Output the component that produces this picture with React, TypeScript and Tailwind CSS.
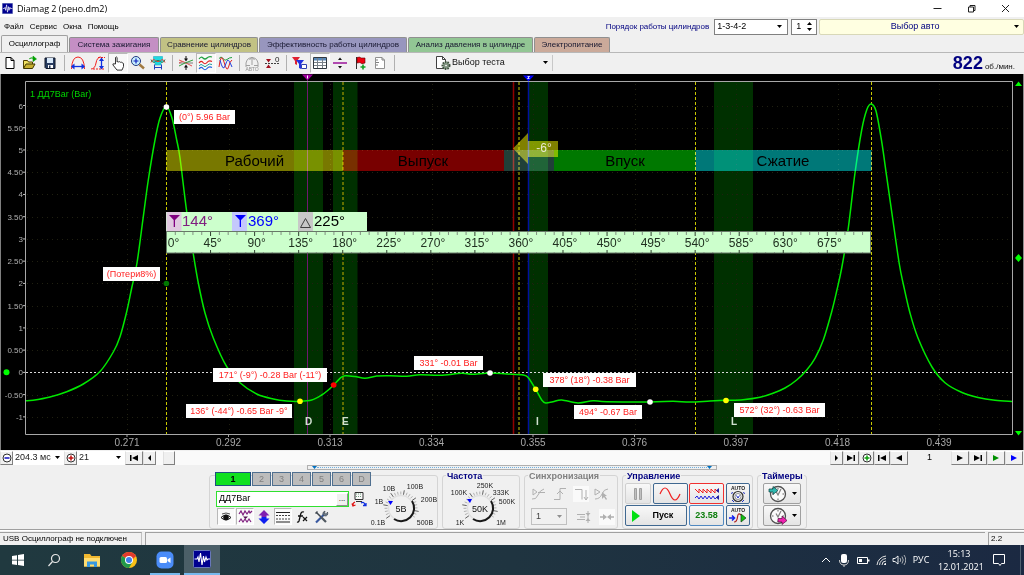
import React from "react";

type Pt = [number, number];

const UI = "font-['Liberation_Sans',Arial,sans-serif]";

/* ---------- chart data ---------- */

const CURVE: Pt[] = [
  [26, 400.8], [33, 400.3], [50, 397], [66.7, 391.7], [83.3, 384], [100, 371.5], [113.3, 352], [120, 336.7],
  [126.7, 311.7], [131.7, 288], [137, 263], [143.3, 216.7], [148.3, 180], [155, 140], [160, 118], [166.4, 106.5],
  [172, 118], [176.7, 140], [180, 158], [186.7, 211.7], [193.3, 254], [198.3, 283], [205, 313], [213.3, 338],
  [226.7, 366.7], [240, 382.7], [256.7, 394], [273.3, 399], [286.7, 401], [300, 401.3], [311.7, 400], [321.7, 395],
  [328.3, 390], [333.7, 385], [340, 378.3], [345, 375.8], [355, 376.5], [365, 378.3], [376.7, 376], [390, 375.7],
  [406.7, 376.3], [420, 374.7], [440, 375.3], [461.7, 373.3], [471.7, 374.3], [490, 373], [506.7, 374],
  [523.3, 375], [528.3, 377.7], [535.7, 389.3], [541.7, 400], [545.7, 403], [553, 401.7], [561.7, 400],
  [578, 403], [593, 400.8], [606.7, 401.7], [650, 402], [673, 401.3], [690, 402], [710, 401], [726, 400.3],
  [743, 399.7], [760, 397.3], [773, 393.3], [785, 388], [796.7, 380], [806.7, 370], [815, 358.3], [823.3, 340],
  [831.7, 311.7], [836.7, 291], [841.7, 268], [848.3, 228], [855, 173], [861.7, 130], [866.7, 110], [871, 104],
  [876, 111], [881.7, 141.7], [886.7, 176.7], [893.3, 223], [899.3, 264], [903.5, 285], [910, 313], [918, 338],
  [932, 367], [945, 382.7], [962, 392.5], [978, 397.5], [995, 400.3], [1012, 401.5],
];

function smooth(points: Pt[]): string {
  let d = `M${points[0][0]} ${points[0][1]}`;
  for (let i = 0; i < points.length - 1; i++) {
    const p0 = points[Math.max(i - 1, 0)];
    const p1 = points[i];
    const p2 = points[i + 1];
    const p3 = points[Math.min(i + 2, points.length - 1)];
    d += `C${p1[0] + (p2[0] - p0[0]) / 6} ${p1[1] + (p2[1] - p0[1]) / 6} ${p2[0] - (p3[0] - p1[0]) / 6} ${p2[1] - (p3[1] - p1[1]) / 6} ${p2[0]} ${p2[1]}`;
  }
  return d;
}

const Y_LABELS = ["6", "5.50", "5", "4.50", "4", "3.50", "3", "2.50", "2", "1.50", "1", "0.50", "0", "-0.50", "-1"];
const X_LABELS = ["0.271", "0.292", "0.313", "0.334", "0.355", "0.376", "0.397", "0.418", "0.439"];
const BANDS: Pt[] = [[294, 323], [333, 357.5], [528, 548], [714, 753]];
const MARKS = [
  { x: 174, y: 110, w: 61, t: "(0°) 5.96 Bar" },
  { x: 103, y: 267, w: 57, t: "(Потери8%)" },
  { x: 213, y: 368, w: 114, t: "171° (-9°) -0.28 Bar (-11°)" },
  { x: 186, y: 404, w: 106, t: "136° (-44°) -0.65 Bar -9°" },
  { x: 414, y: 356, w: 69, t: "331° -0.01 Bar" },
  { x: 543, y: 373, w: 93, t: "378° (18°) -0.38 Bar" },
  { x: 574, y: 405, w: 68, t: "494° -0.67 Bar" },
  { x: 734, y: 403, w: 91, t: "572° (32°) -0.63 Bar" },
];
const STAGES = [
  { x: 166.5, w: 176.5, fill: "#787800", t: "Рабочий", c: 254.5 },
  { x: 343, w: 161, fill: "#780000", t: "Выпуск", c: 423 },
  { x: 504, w: 50, fill: "#204038", t: "", c: 0 },
  { x: 554, w: 141.5, fill: "#007800", t: "Впуск", c: 625 },
  { x: 695.5, w: 176, fill: "#007878", t: "Сжатие", c: 783 },
];

function Chart() {
  const deg = (d: number) => 166.5 + d * 0.979;
  return (
    <svg viewBox="0 74 1024 376" className={`block h-auto w-full bg-black ${UI}`} role="img" aria-label="ДД7Bar">
      <rect x="0" y="74" width="1024" height="376" fill="#000" />
      {BANDS.map(([a, b]) => (
        <rect key={a} x={a} y="82" width={b - a} height="352" fill="#003000" />
      ))}
      {Y_LABELS.map((t, i) => {
        const y = 105.5 + i * 22.24;
        return (
          <g key={t}>
            {t !== "0" && <path d={`M27 ${Math.round(y) + 0.5}H1011`} stroke="#202010" strokeDasharray="1 4" />}
            <path d={`M23 ${y}h3`} stroke="#c0c0c0" />
            <text x="23" y={y + 3} textAnchor="end" fontSize="8" fill="#b0b0b0">{t}</text>
          </g>
        );
      })}
      {X_LABELS.map((t, i) => {
        const x = 127 + i * 101.5;
        return (
          <g key={t}>
            <path d={`M${Math.round(x) + 0.5} 84V434`} stroke="#202010" strokeDasharray="1 4" />
            <path d={`M${x} 434v3`} stroke="#a0a0a0" />
            <text x={x} y="446" textAnchor="middle" fontSize="10" fill="#a8a8a8">{t}</text>
          </g>
        );
      })}
      <path d="M26 372.5H1012" stroke="#d8d8d8" strokeDasharray="2 2" />
      <path d="M307.5 80V434" stroke="#701870" />
      <path d="M166.5 82V434M695.5 82V434M871.5 82V434" stroke="#c8c800" strokeDasharray="3 2" />
      <path d="M343 82V434M519 82V434" stroke="#8c8c00" strokeWidth="1.4" strokeDasharray="3 2" />
      <path d="M513.5 82V434" stroke="#900000" strokeWidth="1.5" />
      <path d="M528.5 82V434" stroke="#0010a0" strokeWidth="1.5" />
      <path d="M25.5 434.5V81.5H1012.5V434.5Z" fill="none" stroke="#a8a8a8" />
      <path d={smooth(CURVE)} fill="none" stroke="#00e800" strokeWidth="1.5" />

      {STAGES.map((s) => (
        <rect key={s.x} x={s.x} y="150" width={s.w} height="21" fill={s.fill} className="mix-blend-screen" />
      ))}
      {STAGES.filter((s) => s.t).map((s) => (
        <text key={s.t} x={s.c} y="166" textAnchor="middle" fontSize="15" fill="#000">{s.t}</text>
      ))}
      <path d="M513 148.500 528 133v8h30v16h-30v7z" fill="#808000" className="mix-blend-screen" />
      <text x="544" y="152" textAnchor="middle" fontSize="12" fill="#e8e8d0">-6°</text>

      <rect x="166" y="212" width="201" height="19" fill="#ccffcc" />
      <rect x="166.500" y="212" width="15" height="19" fill="#e0c8e0" />
      <rect x="232" y="212" width="15" height="19" fill="#c4c8fc" />
      <rect x="298" y="212" width="15" height="19" fill="#c8c8c8" />
      <path d="M169 215h11l-5 5v7h-1.300v-7z" fill="#800080" />
      <path d="M235 215h11l-5 5v7h-1.300v-7z" fill="#0000ff" />
      <path d="M305.500 218.500 300.500 227.500h10z" fill="none" stroke="#404040" />
      <text x="182" y="226" fontSize="15" fill="#802080">144°</text>
      <text x="248" y="226" fontSize="15" fill="#0000ff">369°</text>
      <text x="314" y="226" fontSize="15" fill="#000">225°</text>
      <rect x="166.500" y="231.500" width="704" height="21.500" fill="#ccffcc" stroke="#687868" />
      {Array.from({ length: 79 }, (_, i) => i + 1).map((i) => {
        const big = i % 5 === 0;
        const x = deg(i * 9);
        return <path key={i} d={`M${x} 232v${big ? 4 : 3}M${x} 253v${big ? -3 : -1}`} stroke={big ? "#304030" : "#809080"} />;
      })}
      {Array.from({ length: 16 }, (_, i) => i * 45).map((d) => (
        <text key={d} x={d === 0 ? 173.5 : deg(d) + 2} y="247" textAnchor="middle" fontSize="12" fill="#203020">{d}°</text>
      ))}

      <circle cx="166.400" cy="107" r="2.800" fill="#fff" />
      <circle cx="166.400" cy="283.500" r="2.800" fill="#007800" />
      <circle cx="300" cy="401.300" r="2.800" fill="#ff0" />
      <circle cx="333.700" cy="385" r="2.800" fill="#f00" />
      <circle cx="490" cy="373" r="2.800" fill="#fff" />
      <circle cx="535.700" cy="389.300" r="2.800" fill="#ff0" />
      <circle cx="650" cy="402" r="2.800" fill="#fff" />
      <circle cx="726" cy="400.500" r="2.800" fill="#ff0" />
      {MARKS.map((m) => (
        <g key={m.t}>
          <rect x={m.x} y={m.y} width={m.w} height="14" fill="#fff" />
          <text x={m.x + m.w / 2} y={m.y + 10} textAnchor="middle" fontSize="9" fill="#ff2020">{m.t}</text>
        </g>
      ))}
      <g fontSize="10" fontWeight="bold" fill="#d0e0d0">
        <text x="305" y="425">D</text>
        <text x="342" y="425">E</text>
        <text x="536" y="425">I</text>
        <text x="731" y="425">L</text>
      </g>
      <text x="30" y="97" fontSize="9" fill="#00d400">1 ДД7Bar (Bar)</text>
      <path d="M302 74.500h11l-5.500 6z" fill="#a000a0" />
      <path d="M307.500 75.500v3" stroke="#fff" />
      <path d="M523 75.500h11l-5.500 6z" fill="#0000ff" />
      <path d="M527.500 76.500h2l-2 2h2" stroke="#fff" fill="none" strokeWidth=".8" />
      <path d="M1015 86h7l-3.500-4.500zM1018.500 254l3.500 4-3.500 4-3.500-4zM1015 431h7l-3.500 4.500z" fill="#00ff00" />
      <circle cx="6.500" cy="372.300" r="3" fill="#00ff00" />
      <path d="M.5 74V450" stroke="#808080" />
      <path d="M1023.500 74V450" stroke="#909090" />
    </svg>
  );
}

/* ---------- small building blocks ---------- */

function Svg({ w = 16, h = 16, children }: { w?: number; h?: number; children: React.ReactNode }) {
  return (
    <svg width={w} height={h} viewBox={`0 0 ${w} ${h}`} fill="none" className="block shrink-0" aria-hidden="true">
      {children}
    </svg>
  );
}

function Tool({ label, on, children }: { label: string; on?: boolean; children: React.ReactNode }) {
  return (
    <button
      aria-label={label}
      className={
        on
          ? "flex h-5 w-5 items-center justify-center border border-t-[#b8b8b8] border-r-white border-b-white border-l-[#b8b8b8] bg-[#f8f8f8]"
          : "flex h-5 w-5 items-center justify-center"
      }
    >
      {children}
    </button>
  );
}

function Sep({ wide }: { wide?: boolean }) {
  return (
    <span className={wide ? "flex w-2 justify-center" : "flex w-[6px] justify-center"}>
      <span className="h-4 w-px bg-[#b0b0b0]" />
    </span>
  );
}

const Down = () => (
  <Svg w={5} h={3}>
    <path d="M0 0h5L2.500 3z" fill="#000" />
  </Svg>
);

const Logo = ({ size }: { size: number }) => (
  <svg width={size} height={size} viewBox="0 0 18 18" fill="none" aria-hidden="true" className="block shrink-0">
    <rect x=".5" y=".5" width="17" height="17" rx="1" fill="#000090" stroke="#6878b8" />
    <path d="M1.500 9h2.500l1-2 1 5 1.500-9 1.500 12 1.500-9 1 6 1.500-5 1 3 1-1h2" stroke="#fff" strokeWidth="1.100" />
  </svg>
);

const TABS = [
  { t: "Система зажигания", c: "w-[90px] bg-[#c48fc4]" },
  { t: "Сравнение цилиндров", c: "w-[98px] bg-[#c2c284]" },
  { t: "Эффективность работы цилиндров", c: "w-[148px] bg-[#9896be]" },
  { t: "Анализ давления в цилиндре", c: "w-[125px] bg-[#92c694]" },
  { t: "Электропитание", c: "w-[76px] bg-[#cbaa9a]" },
];

function Toolbar() {
  return (
    <div className="flex h-[22px] items-center border-t border-[#b8b8b8] bg-[#f0f0f0] pb-[2px]">
      <Tool label="Новый"><Svg><path d="M4 2.500h5l3 3v8H4z" fill="#fff" stroke="#000" /><path d="M9 2.500v3h3" stroke="#000" /></Svg></Tool>
      <Tool label="Открыть"><Svg><path d="M1.500 13V5.500h4l1 1.500h4v2" stroke="#504000" fill="#f0e060" /><path d="M1.500 13.500 4 9h9l-2.500 4.500z" fill="#c8b030" stroke="#403800" /><path d="M7 4q2-2 4-1M11 1v5.500L14.500 4z" fill="#00a000" stroke="#00a000" strokeWidth=".6" /></Svg></Tool>
      <Tool label="Сохранить"><Svg><path d="M3 3h10v10.500H4L3 12.500z" fill="#283c60" stroke="#101828" /><path d="M5 3h6v5H5z" fill="#d8e8f8" /><path d="M6 10h5v3H6z" fill="#fff" /><path d="M7 10.500h1.500v2.500H7z" fill="#203050" /></Svg></Tool>
      <Sep wide />
      <Tool label="Интервал"><Svg><path d="M1.500 14Q2 2 8 2t6.500 12" stroke="#f02020" /><path d="M2 11.500h12" stroke="#1030e0" strokeWidth="1.300" /><path d="M1 11.500 4.500 8.500v6zM15 11.500l-3.500-3v6z" fill="#1030e0" /></Svg></Tool>
      <Tool label="Амплитуда"><Svg><path d="M1 14q4 0 5-6t5-6" stroke="#f02020" /><path d="M8 2.500h7M3 14h12" stroke="#f02020" strokeDasharray="2 1" /><path d="M11.500 4v9" stroke="#1030e0" strokeWidth="1.300" /><path d="M11.500 2.500 14 6H9zM11.500 14.500 14 11H9z" fill="#1030e0" /></Svg></Tool>
      <Tool label="Рука" on><Svg><path d="M5.500 9V2.500q.8-1.200 1.600 0V7q.8-1 1.600 0 .9-.8 1.700.3 1-.6 1.700.5 1-.2 1.400.8v3l-1.500 3.500H7L3 10q-.6-1.500 1-1.200z" fill="#fff" stroke="#202020" strokeWidth=".9" /></Svg></Tool>
      <Tool label="Масштаб"><Svg><circle cx="6" cy="6" r="4.500" fill="#c8f0ff" stroke="#203880" /><path d="M3.500 6h5M6 3.500v5" stroke="#1020c0" strokeWidth="1.200" /><path d="m9.500 9.500 4.500 4" stroke="#a07840" strokeWidth="2.400" /></Svg></Tool>
      <Tool label="Машина"><Svg><path d="M3.500 1.500h9v5L11 8v2H5V8L3.500 6.500z" fill="#20d8e0" stroke="#20b0c0" strokeWidth=".6" /><path d="M1 7.500Q3 3 5.500 5.500t5 0T15 7.500" stroke="#e04040" /><path d="M1 4.500Q3 9 5.500 6.500t5 0T15 4.500" stroke="#308050" /><path d="M4.500 9.500v5M11.500 9.500v5M5 12.500h6" stroke="#2040c0" /></Svg></Tool>
      <Sep wide />
      <Tool label="Совмещение"><Svg><path d="M1 8h14" stroke="#606060" strokeWidth=".8" /><path d="m1 5 5 2 8 4M1 8l3-1.500" stroke="#e05050" /><path d="m1 11 6-3 8-3" stroke="#30a040" /><path d="M8 6.500 6 3.500h4zM8 9.500 6 12.500h4z" fill="#101010" /><path d="M8 1v3M8 12v3" stroke="#101010" /></Svg></Tool>
      <Tool label="Сигналы" on><Svg><path d="M1 4q2-3 4-1t4 0 5-1" stroke="#20a040" strokeWidth="1.200" /><path d="M1 8q2-3 4-.5t4 0 5-1" stroke="#e02020" strokeWidth="1.200" /><path d="M1 11q2-3 4-.5t4 0 5-1" stroke="#20a0a0" /><path d="M1 14q2-3 4-.5t4 0 5-1" stroke="#2060e0" strokeWidth="1.200" /></Svg></Tool>
      <Tool label="Наложение"><Svg><path d="M1 3.500q2-3 4 0t4 1 5-2" stroke="#20a040" /><path d="M1 12Q3-4 6 7t4.500 5T14 5" stroke="#e02020" /><path d="M2 5q3 12 5 6t3-6 4 7" stroke="#2040e0" /></Svg></Tool>
      <Sep />
      <Tool label="Авто"><Svg><path d="M2 12Q1 3 8 2.500 15 3 14 12" stroke="#a0a0a0" /><path d="M8 2v8M5.500 5 8 2l2.500 3M2 10.500h4M10 10.500h4" stroke="#a0a0a0" /><text x="8" y="15.500" textAnchor="middle" fontSize="5" fill="#909090">АВТО</text></Svg></Tool>
      <Tool label="Ноль"><Svg><path d="M1 8.500h14" stroke="#404040" strokeDasharray="2 1" /><path d="M4.500 7.500 2 4h5zM4.500 9.500 2 13h5z" fill="#a01020" /><text x="11" y="7" fontSize="8" fill="#202020">0</text></Svg></Tool>
      <Sep wide />
      <Tool label="Фильтр"><Svg><path d="M0 2h8L5 6v4L3 9V6z" fill="#e02030" /><path d="M4 5h8L9 9v5l-2-1V9z" fill="#2030e0" /><path d="M9.500 9.500h5v4h-5z" fill="#fff" stroke="#3040b0" /></Svg></Tool>
      <Tool label="Таблица" on><Svg><path d="M1.500 2.500h13v11h-13z" fill="#fff" stroke="#303840" /><path d="M2 3h12v2.500H2z" fill="#5888b8" /><path d="M5.500 3v10M10.500 3v10M2 7.500h12M2 10.500h12" stroke="#788088" /></Svg></Tool>
      <Tool label="Разделить"><Svg><path d="M1 8h14" stroke="#a020a0" strokeWidth="1.600" /><path d="M8 2.500 10 5H6zM8 13.500 10 11H6z" fill="#101010" /></Svg></Tool>
      <Tool label="Метка"><Svg><path d="M4.500 2v12" stroke="#303030" /><path d="M5 2.500q3-1 4 .5h4v5q-4 1.500-5-.5l-3 .5z" fill="#f00010" stroke="#600000" strokeWidth=".6" /><path d="M8.500 12h5M11 9.500v5" stroke="#10a020" strokeWidth="1.600" /></Svg></Tool>
      <Tool label="Отчёт"><Svg><path d="M3.500 2.500h6.500l2.500 2.500v8.500h-9z" fill="#fff" stroke="#909090" /><path d="M4 5h2M4 7.500h3M4 10h2M10 2.500V5h2.500" stroke="#808080" /></Svg></Tool>
      <Sep wide />
      <button className="flex h-5 w-[154px] items-center pr-1 pl-9 text-[9px] text-[#101010]">
        <Svg w={18}>
          <path d="M2.500 1.500h6l3 3v9h-9z" fill="#fff" stroke="#404040" /><path d="M8.500 1.500v3h3" stroke="#404040" />
          <circle cx="12" cy="10.500" r="3.500" fill="#90a890" stroke="#405040" strokeWidth="2" strokeDasharray="1.500 1" /><circle cx="12" cy="10.500" r="1.500" fill="#e0e8e0" stroke="#405040" strokeWidth=".6" />
        </Svg>
        <span className="flex-1 text-left">Выбор теста</span>
        <Down />
      </button>
      <span className="h-4 w-px bg-[#c8c8c8]" />
      <output className="ml-auto flex items-baseline pr-[9px] text-[8px] text-[#101010]">
        <b className="mr-[2px] text-[18px] leading-[20px] text-[#000080]">822</b>об./мин.
      </output>
    </div>
  );
}

/* ---------- bottom navigation ---------- */

function Nav({ label, w, children }: { label: string; w: string; children: React.ReactNode }) {
  return (
    <button aria-label={label} className={`${w} flex h-[14px] shrink-0 items-center justify-center border border-t-white border-r-[#808080] border-b-[#808080] border-l-[#e0e0e0] bg-[#f0f0f0]`}>
      {children}
    </button>
  );
}

const Play = ({ c = "#000" }: { c?: string }) => <Svg w={8} h={8}><path d="M1 1v6l6-3z" fill={c} /></Svg>;
const Step = ({ back }: { back?: boolean }) => <Svg w={5} h={8}><path d={back ? "M4 1v6L1 4z" : "M1 1v6l3-3z"} fill="#000" /></Svg>;
const Back = () => <Svg w={8} h={8}><path d="M7 1v6L1 4z" fill="#000" /></Svg>;
const First = () => <Svg w={8} h={8}><path d="M0 1h1.500v6H0zM8 1v6L2 4z" fill="#000" /></Svg>;
const Last = () => <Svg w={8} h={8}><path d="M0 1v6l6-3zM6.500 1H8v6H6.500z" fill="#000" /></Svg>;
const Round = ({ c, plus }: { c: string; plus?: boolean }) => (
  <Svg w={10} h={10}><circle cx="5" cy="5" r="4" fill="#fff" stroke="#303030" /><path d={plus ? "M2.500 5h5M5 2.500v5" : "M2.500 5h5"} stroke={c} strokeWidth="1.500" /></Svg>
);

function Drop({ label, value, w }: { label: string; value: string; w: string }) {
  return (
    <label className={`${w} relative flex h-[14px] shrink-0 items-center bg-white text-[9px]`}>
      <select aria-label={label} className="h-full w-full appearance-none bg-transparent pl-[2px] text-[#202020]">
        <option>{value}</option>
      </select>
      <span className="pointer-events-none absolute right-1"><Down /></span>
    </label>
  );
}

function NavBar() {
  return (
    <div className="flex h-[15px] items-center bg-[#f0f0f0]">
      <Nav label="Сжать" w="w-[13px]"><Round c="#1010c0" /></Nav>
      <Drop label="Длительность" value="204.3 мс" w="w-[51px]" />
      <Nav label="Растянуть" w="w-[13px]"><Round c="#c01010" plus /></Nav>
      <Drop label="Деления" value="21" w="w-[48px]" />
      <Nav label="В начало" w="w-[18px]"><First /></Nav>
      <Nav label="Влево" w="w-[13px]"><Step back /></Nav>
      <div className="flex h-[14px] flex-1 items-center bg-[#fafafa] pl-[7px]">
        <Nav label="Прокрутка" w="w-[12px]">{null}</Nav>
      </div>
      <Nav label="Вправо" w="w-[13px]"><Step /></Nav>
      <Nav label="В конец" w="w-[16px]"><Last /></Nav>
      <Nav label="Добавить" w="w-[15px]"><Round c="#10a010" plus /></Nav>
      <Nav label="Первый кадр" w="w-[16px]"><First /></Nav>
      <Nav label="Предыдущий кадр" w="w-[18px]"><Back /></Nav>
      <span className="w-[43px] text-center text-[9px]">1</span>
      <Nav label="Следующий кадр" w="w-[18px]"><Play /></Nav>
      <Nav label="Последний кадр" w="w-[18px]"><Last /></Nav>
      <Nav label="Воспроизвести" w="w-[18px]"><Play c="#009000" /></Nav>
      <Nav label="Повтор" w="w-[18px]"><Play c="#0000ff" /></Nav>
      <span className="w-px" />
    </div>
  );
}

/* ---------- control panel ---------- */

function Group({ title, dim, w, children }: { title: string; dim?: boolean; w: string; children: React.ReactNode }) {
  return (
    <section aria-label={title} className={`${w} relative h-[54px] rounded-[3px] border border-[#d4d4d4]`}>
      <h2 className={`absolute -top-[5px] left-[3px] z-10 bg-[#f0f0f0] px-px text-[9px] leading-[10px] font-bold ${dim ? "text-[#808080]" : "text-[#000080]"}`}>{title}</h2>
      {children}
    </section>
  );
}

type KnobLabel = [string, number, number];

function Knob({ value, cx, labels, arrow }: { value: string; cx: number; labels: KnobLabel[]; arrow: string }) {
  const cy = 32;
  return (
    <svg width="74" height="52" viewBox="0 0 74 52" fill="none" className="block" role="img" aria-label={value}>
      {Array.from({ length: 23 }, (_, i) => {
        const a = ((145 + i * 11.3) * Math.PI) / 180;
        const r = i % 4 === 0 ? 18 : 16.5;
        return <path key={i} d={`M${cx + 13.5 * Math.cos(a)} ${cy + 13.5 * Math.sin(a)}L${cx + r * Math.cos(a)} ${cy + r * Math.sin(a)}`} stroke={i % 4 === 0 ? "#606060" : "#b0b0b0"} />;
      })}
      <circle cx={cx} cy={cy} r="12.500" fill="#f0f0f0" stroke="#e0e0e0" strokeWidth="1.500" />
      <path d={`M${cx + 11} ${cy - 7}A13 13 0 0 1 ${cx - 7} ${cy + 11}`} stroke="#181818" strokeWidth="2" />
      <path d={arrow} fill="#0000ff" />
      <text x={cx} y={cy + 4} textAnchor="middle" fontSize="9" fill="#101010">{value}</text>
      {labels.map(([t, x, y]) => (
        <text key={t} x={x} y={y} textAnchor="middle" fontSize="7" fill="#202020">{t}</text>
      ))}
    </svg>
  );
}

function Btn({ label, c, children }: { label: string; c: string; children: React.ReactNode }) {
  return (
    <button aria-label={label} className={`${c} flex h-[21px] items-center justify-center rounded-[2px] border bg-gradient-to-b from-[#f8f8f8] to-[#e4e4e4]`}>
      {children}
    </button>
  );
}

function Clock({ out }: { out?: boolean }) {
  return (
    <Svg w={20} h={18}>
      <circle cx="10" cy="9" r="7.500" fill="#fafafa" stroke="#505050" strokeWidth="1.300" />
      <path d="M10 3v1.500M10 13.500V15M4 9h1.500M14.500 9H16" stroke="#606060" />
      <path d="M8 6.500 10 10l3-6" stroke="#808080" strokeWidth="1.200" />
      {out ? <path d="M10 11.500h4V9l5 4.500-5 4v-2.500h-4z" fill="#f020b0" stroke="#501040" strokeWidth=".7" /> : <path d="M1 4h4V1.500l5 4-5 4V7H1z" fill="#30b8b0" stroke="#104040" strokeWidth=".7" />}
    </Svg>
  );
}

function AutoIcon({ run }: { run?: boolean }) {
  return (
    <Svg w={20} h={19}>
      <text x="10" y="6" textAnchor="middle" fontSize="5" fontWeight="bold" fill="#202020">AUTO</text>
      {run ? (
        <>
          <path d="M6 16q3 0 3.500-5T13 9" stroke="#b02020" strokeWidth="1.200" />
          <path d="M1 12h5M4 9.500 6.500 12 4 14.500" stroke="#1020f0" strokeWidth="1.500" />
          <path d="M13 8v8l5-4z" fill="#10c010" stroke="#104010" strokeWidth=".7" />
        </>
      ) : (
        <>
          <circle cx="10" cy="12.500" r="5" stroke="#303030" strokeWidth="1.200" />
          <circle cx="10" cy="12.500" r="3" fill="#fff" stroke="#909090" />
          <path d="m8.500 11.500 1.500 2.500 1.500-2.500M3.500 10l1-2M16.500 10l-1-2M4 16l2 2M16 16l-2 2" stroke="#2030c0" />
        </>
      )}
    </Svg>
  );
}

function SmallTool({ label, on, children }: { label: string; on?: boolean; children: React.ReactNode }) {
  return (
    <button aria-label={label} className={`flex h-[17px] w-[18px] items-center justify-center ${on ? "border border-t-[#b8b8b8] border-r-white border-b-white border-l-[#b8b8b8] bg-[#fafafa]" : ""}`}>
      {children}
    </button>
  );
}

function Controls() {
  return (
    <div className="flex flex-1 flex-col border-b border-[#a0a0a0] bg-[#f0f0f0]">
      <div className="mx-auto flex h-[5px] w-[40%] items-center justify-between border border-[#b0b0b0] px-1">
        <Svg w={5} h={3}><path d="M0 0h5L2.500 3z" fill="#0070c0" /></Svg>
        <span className="h-px flex-1 border-t border-dotted border-[#70b0e0]" />
        <Svg w={5} h={3}><path d="M0 0h5L2.500 3z" fill="#0070c0" /></Svg>
      </div>
      <div className="flex justify-center gap-[4px] pt-[5px] pr-2">
        <section aria-label="Канал" className="flex h-[54px] w-[229px] rounded-[3px] border border-[#d4d4d4] pl-[5px]">
          <div className="-mt-[4px] w-[158px] shrink-0">
            <div className="flex gap-px">
              <button className="h-[14px] w-[36px] border border-[#205080] bg-[#10e020] text-[9px] leading-[12px] font-bold">1</button>
              {["2", "3", "4", "5", "6", "D"].map((n) => (
                <button key={n} className="h-[14px] w-[19px] border border-[#507090] bg-[#bcbcbc] text-[9px] leading-[12px] text-[#808080]">{n}</button>
              ))}
            </div>
            <div className="mt-[5px] flex items-center">
              <div className="ml-px flex h-[16px] w-[133px] items-center border border-[#30e030] bg-white">
                <input aria-label="Датчик" defaultValue="ДД7Bar" className="w-0 flex-1 bg-transparent pl-[2px] text-[9px] outline-none" />
                <button className="h-[13px] w-[12px] border border-t-white border-r-[#909090] border-b-[#909090] border-l-white bg-[#f0f0f0] text-[8px] leading-[6px]">...</button>
              </div>
              <button aria-label="Обновить датчик" className="ml-[2px]">
                <Svg>
                  <path d="M4 1.500h8v7H4z" fill="#f8f8f8" stroke="#303030" /><path d="M5 3h6M5 5.500h6" stroke="#70a080" strokeDasharray="1 1" />
                  <path d="M4 11q-2.500 1-2 3.500M1 12.500 2 15l2.500-1" stroke="#e01010" strokeWidth="1.300" /><path d="M10 12q3-2 4 2M12 14.500h3V12" stroke="#1030e0" strokeWidth="1.300" /><path d="M5 10.500h6" stroke="#303030" />
                </Svg>
              </button>
            </div>
            <div className="mt-px flex gap-px pl-[2px]">
              <SmallTool label="Показать" on><Svg><path d="M3 8.500q5-5 10 0-5 5-10 0z" fill="#fff" stroke="#101010" /><circle cx="8" cy="8.500" r="2.800" fill="#101010" /><path d="M4 5q4-2 8 0" stroke="#505050" /></Svg></SmallTool>
              <SmallTool label="Форма сигнала" on><Svg><path d="m2 5 2-3 2 4 2-4 2 3 2-3 1 2 2-2M2 13l2-3 2 3 2-3 2 3 2-3 2 3" stroke="#802080" strokeWidth="1.200" /><path d="M6 7.500h5L8.500 10z" fill="#501050" /></Svg></SmallTool>
              <SmallTool label="Масштаб по вертикали"><Svg><path d="M8 1 13.500 6.500h-3V8h-5V6.500h-3z" fill="#8020b0" /><path d="M8 15 13.500 9.500h-3V8h-5v1.500h-3z" fill="#1020f0" /></Svg></SmallTool>
              <SmallTool label="Линии" on><Svg><path d="M1 3.500h14M1 13h14" stroke="#202020" /><path d="M1 6.500h14M1 10h14" stroke="#404040" strokeDasharray="2 1" /></Svg></SmallTool>
              <SmallTool label="Функция"><Svg><path d="M10 3Q7 2 6.500 6L5 12q-.5 1.500-2 1M4 7h5" stroke="#101010" strokeWidth="1.300" /><path d="m9 8 4 4M13 8l-4 4" stroke="#101010" strokeWidth="1.200" /></Svg></SmallTool>
              <SmallTool label="Настройки"><Svg><path d="m3 13.500 8-8" stroke="#3858a0" strokeWidth="2.200" /><path d="M10 6q-1-3 2-4l-.500 2.500 2 .500 1-2q1 4-2.500 4z" fill="#708090" stroke="#303840" strokeWidth=".6" /><path d="m3 3 5 5M2.500 4.500 4.500 2.500" stroke="#404850" strokeWidth="1.500" /><path d="m8 8 5 5" stroke="#505860" strokeWidth="2.200" /></Svg></SmallTool>
            </div>
          </div>
          <div className="-ml-[5px]">
            <Knob value="5В" cx={33} arrow="M20 25h5l-2.500 4z" labels={[["10В", 21, 15], ["100В", 47, 13], ["1В", 11, 28], ["200В", 61, 26], ["0.1В", 10, 49], ["500В", 57, 49]]} />
          </div>
        </section>
        <Group title="Частота" w="w-[78px]">
          <Knob value="50K" cx={37} arrow="M24 23h5l-2 4z" labels={[["100K", 16, 19], ["250K", 42, 12], ["333K", 58, 19], ["500K", 64, 28], ["1K", 17, 49], ["1M", 58, 49]]} />
        </Group>
        <Group title="Синхронизация" dim w="w-[94px]">
          <div className="flex h-full flex-col justify-end gap-[6px] pb-[3px] pl-[6px]">
            <div className="flex gap-[5px]">
              <Svg><path d="M1 13q4 1 6-4t6-6M2 3l4 3-4 3zM7 6.500h7" stroke="#b0b0b0" /></Svg>
              <Svg><path d="M2 13.500h6v-11h6M5 8l3-3 3 3" stroke="#b0b0b0" /></Svg>
              <span className="bg-[#fafafa]"><Svg><path d="M2 3.500h7v10M13 4v10M11 11l2 3 2-3" stroke="#b0b0b0" /></Svg></span>
              <Svg><path d="M1 3l5 3-5 3zM1 13q5 0 7-5t6-5" stroke="#b0b0b0" /><path d="M8 6v7l2-2 2 3 1-1-2-3h2z" fill="#b0b0b0" /></Svg>
            </div>
            <div className="flex items-center gap-[8px]">
              <label className="relative flex h-[17px] w-[36px] items-center border border-[#c0c0c0] text-[9px]">
                <select aria-label="Канал синхронизации" className="h-full w-full appearance-none pl-1 text-[#404040]"><option>1</option></select>
                <span className="pointer-events-none absolute right-1 opacity-40"><Down /></span>
              </label>
              <Svg><path d="M2 5.500h8M5 8h5M2 10.500h8" stroke="#b0b0b0" /><path d="M13 2v12" stroke="#b0b0b0" /><path d="M13 7l-2.500-3h5zM13 9l-2.500 3h5z" fill="#b0b0b0" /></Svg>
              <span className="bg-[#fafafa]"><Svg><path d="M1 8h4M11 8h4" stroke="#b0b0b0" strokeWidth="1.500" /><path d="M4 5l4 3-4 3zM12 5 8 8l4 3z" fill="#b0b0b0" /></Svg></span>
            </div>
          </div>
        </Group>
        <Group title="Управление" w="w-[131px]">
          <div className="flex h-full flex-col justify-end gap-px px-[2px] pb-[2px]">
            <div className="flex justify-between">
              <Btn label="Пауза" c="w-[26px] border-[#d0d0d0]"><Svg w={10} h={14}><path d="M1.500 1.500h2v11h-2zM6.500 1.500h2v11h-2z" fill="#c0c0c0" stroke="#a0a0a0" /></Svg></Btn>
              <Btn label="Синус" c="w-[35px] border-[#406890]"><Svg w={24}><path d="M2 8q5-12 10 0t10 0" stroke="#f02020" strokeWidth="1.200" /></Svg></Btn>
              <Btn label="Пила" c="w-[35px] border-[#f03030]"><Svg w={26}><path d="m1 3 4 4V3l4 4V3l4 4V3l4 4V3l4 4V3l3 3" stroke="#f02020" /><path d="m1 12 2-2 2 3 2-3 2 3 2-3 2 3 2-3 2 3 2-3 2 3 3-3" stroke="#2020e0" /><path d="M25 2v5l-3-2.500zM25 9v5l-3-2.500z" fill="#2020a0" /></Svg></Btn>
              <Btn label="Авто настройка" c="w-[24px] border-[#406890]"><AutoIcon /></Btn>
            </div>
            <div className="flex justify-between">
              <Btn label="Пуск" c="w-[62px] border-[#406890]">
                <Svg w={10} h={14}><path d="M1 1v12l8-6z" fill="#00e010" /></Svg>
                <b className="mr-2 ml-3 text-[9px]">Пуск</b>
              </Btn>
              <Btn label="23.58" c="w-[35px] border-[#5088c0]"><b className="text-[9px] text-[#108010]">23.58</b></Btn>
              <Btn label="Авто пуск" c="w-[24px] border-[#406890]"><AutoIcon run /></Btn>
            </div>
          </div>
        </Group>
        <Group title="Таймеры" w="w-[50px]">
          <div className="flex h-full flex-col justify-end gap-px px-[5px] pb-[2px]">
            <Btn label="Таймер включения" c="w-full gap-1 border-[#a0a0a0]"><Clock /><Down /></Btn>
            <Btn label="Таймер выключения" c="w-full gap-1 border-[#a0a0a0]"><Clock out /><Down /></Btn>
          </div>
        </Group>
      </div>
    </div>
  );
}

/* ---------- desktop task bar ---------- */

function Taskbar() {
  return (
    <footer className="flex h-[30px] items-stretch bg-gradient-to-r from-[#20393f] via-[#1f3440] to-[#1b2942] font-['Open_Sans',sans-serif] text-[9px] text-white">
      <button aria-label="Пуск Windows" className="flex w-9 items-center justify-center"><Svg w={14} h={14}><path d="m1 3 5-.8V6.700H1zM7 2l6-1v5.700H7zM1 7.500h5V12l-5-.8zM7 7.500h6V13l-6-.900z" fill="#fff" /></Svg></button>
      <button aria-label="Поиск" className="flex w-9 items-center justify-center"><Svg w={14} h={14}><circle cx="8.500" cy="5.500" r="4" stroke="#e8e8e8" strokeWidth="1.200" /><path d="m5.500 8.500-4 4.500" stroke="#e8e8e8" strokeWidth="1.200" /></Svg></button>
      <button aria-label="Проводник" className="flex w-10 items-center justify-center"><Svg w={18}><path d="M1 2h6l1.500 2H17v10.500H1z" fill="#f0b830" /><path d="M1 6h16v8.500H1z" fill="#ffdc70" /><path d="M4 15V9.500h10V15h-3v-2.500H7V15z" fill="#3898e0" /></Svg></button>
      <button aria-label="Chrome" className="flex w-[34px] items-center justify-center">
        <Svg w={18} h={18}>
          <circle cx="9" cy="9" r="8" fill="#fbc116" /><path d="M9 9 2.070 5A8 8 0 0 1 15.930 5z" fill="#e33b2e" /><path d="M9 9 2.070 5A8 8 0 0 0 9 17l3.500-6z" fill="#229a4b" /><path d="M9 5h6.930L12 9z" fill="#e33b2e" />
          <circle cx="9" cy="9" r="4" fill="#fff" /><circle cx="9" cy="9" r="3" fill="#3f7fea" />
        </Svg>
      </button>
      <button aria-label="Zoom" className="flex w-[38px] items-center justify-center bg-[linear-gradient(#76b9ed,#76b9ed)] bg-[length:30px_2px] bg-bottom bg-no-repeat"><Svg w={18} h={18}><rect x=".5" y=".5" width="17" height="17" rx="5" fill="#4a8cf8" /><rect x="3.500" y="6" width="7.500" height="6" rx="1.500" fill="#fff" /><path d="m11.500 8.500 3-2v5.500l-3-2z" fill="#fff" /></Svg></button>
      <button aria-label="Diamag 2" className="flex w-9 items-center justify-center border-b-2 border-[#76b9ed] bg-[#4b5f68]"><Logo size={18} /></button>
      <div className="ml-auto flex items-center">
        <div className="flex items-center gap-[3px]">
          <Svg w={14}><path d="m3 10 4-4 4 4" stroke="#fff" /></Svg>
          <Svg w={16}><rect x="5" y="2" width="6" height="9" rx="2" fill="#fff" /><path d="M3.500 8q0 5 4.500 5t4.500-5M8 13v2" stroke="#d0d0d0" /></Svg>
          <Svg w={16}><path d="M2.500 5.500h10v6h-10z" stroke="#fff" /><path d="M4 7h3v3H4zM13 7.500h1.500v2H13z" fill="#fff" /></Svg>
          <Svg w={14}><path d="M3 13a10 10 0 0 1 9-9M5.500 13A7 7 0 0 1 12 6.500M8 13a4 4 0 0 1 4-4" stroke="#e0e0e0" /><path d="M10 13a2 2 0 0 1 2-2v2z" fill="#fff" /></Svg>
          <Svg w={15}><path d="M2 6.500h2L7 4v8L4 9.500H2z" stroke="#fff" strokeWidth=".9" /><path d="M9 6q1.500 2 0 4M11 4.500q2.500 3.500 0 7M13 3q3.500 5 0 10" stroke="#d0d0d0" strokeWidth=".8" /></Svg>
        </div>
        <span className="ml-[6px] w-[18px] text-center">РУС</span>
        <time className="ml-[8px] w-[42px] text-center leading-[13px] whitespace-nowrap">15:13<br />12.01.2021</time>
        <button aria-label="Уведомления" className="ml-[12px]"><Svg w={14}><path d="M1.500 2.500h11v9H9.500L8 13.500 6.500 11.500h-5z" stroke="#fff" /></Svg></button>
        <span className="ml-[14px] h-[30px] w-px bg-[#506070]" />
        <span className="w-[3px]" />
      </div>
    </footer>
  );
}

export default function App() {
  return (
    <div className={`flex min-h-screen flex-col bg-[#f0f0f0] text-black ${UI}`}>
      <header className="flex h-[17px] items-center bg-white pl-[2px] font-['Open_Sans',sans-serif] text-[9px]">
        <Logo size={11} />
        <span className="ml-1">Diamag 2 (рено.dm2)</span>
        <div className="ml-auto flex items-center pr-[2px]">
          <button aria-label="Свернуть" className="flex w-[34px] justify-center"><Svg w={9} h={9}><path d="M.5 4.500h8" stroke="#202020" /></Svg></button>
          <button aria-label="Восстановить" className="flex w-[34px] justify-center"><Svg w={9} h={9}><path d="M1.500 3h5v5h-5zM3 3V1.500h5v5H6.500" stroke="#202020" /></Svg></button>
          <button aria-label="Закрыть" className="flex w-[34px] justify-center"><Svg w={9} h={9}><path d="m1 1 7 7M8 1 1 8" stroke="#202020" /></Svg></button>
        </div>
      </header>
      <div className="flex h-[18px] items-center pt-px text-[9px]">
        <nav className="flex gap-[6px] pl-1 text-[8px]">
          {["Файл", "Сервис", "Окна", "Помощь"].map((m) => <button key={m}>{m}</button>)}
        </nav>
        <label htmlFor="order" className="ml-auto pr-[5px] text-[8px] text-[#000080]">Порядок работы цилиндров</label>
        <div className="relative flex h-[16px] w-[74px] items-center border border-[#808080] bg-white">
          <select id="order" className="h-full w-full appearance-none pl-[2px]"><option>1-3-4-2</option></select>
          <span className="pointer-events-none absolute right-[5px]"><Down /></span>
        </div>
        <div className="ml-[3px] flex h-[16px] w-[26px] items-center border border-[#808080] bg-white pr-1">
          <input aria-label="Цилиндр" defaultValue="1" className="w-0 flex-1 pl-1 outline-none" />
          <span className="flex flex-col gap-[3px]">
            <button aria-label="Больше"><Svg w={5} h={3}><path d="M0 3h5L2.500 0z" fill="#000" /></Svg></button>
            <button aria-label="Меньше"><Down /></button>
          </span>
        </div>
        <button className="ml-[2px] flex h-[16px] w-[20%] items-center rounded-[2px] border border-[#d8d8b8] bg-[#ffffe1] pr-1 text-[#000080]">
          <span className="flex-1 pr-1">Выбор авто</span><Down />
        </button>
      </div>
      <div role="tablist" className="flex h-[17px] items-end gap-px pl-px text-[8px] text-[#181830]">
        <button role="tab" aria-selected="true" className="h-[17px] w-[67px] rounded-t-[2px] border border-b-0 border-[#a0a0a0] bg-[#f0f0f0] text-black">Осциллограф</button>
        {TABS.map((t) => (
          <button key={t.t} role="tab" className={`${t.c} h-[15px] rounded-t-[2px] border border-b-0 border-[#909090] whitespace-nowrap`}>{t.t}</button>
        ))}
      </div>
      <Toolbar />
      <Chart />
      <NavBar />
      <Controls />
      <div className="flex h-[15px] items-center gap-[3px] border-t border-white text-[8px]">
        <span className="h-[13px] w-[142px] border-t border-r border-t-[#a0a0a0] border-r-[#c0c0c0] pl-[3px] leading-[12px]">USB Осциллограф не подключен</span>
        <span className="h-[13px] flex-1 border-t border-l border-[#a0a0a0]" />
        <span className="h-[13px] w-9 border-t border-l border-[#a0a0a0] pl-[2px] leading-[12px]">2.2</span>
      </div>
      <Taskbar />
    </div>
  );
}
